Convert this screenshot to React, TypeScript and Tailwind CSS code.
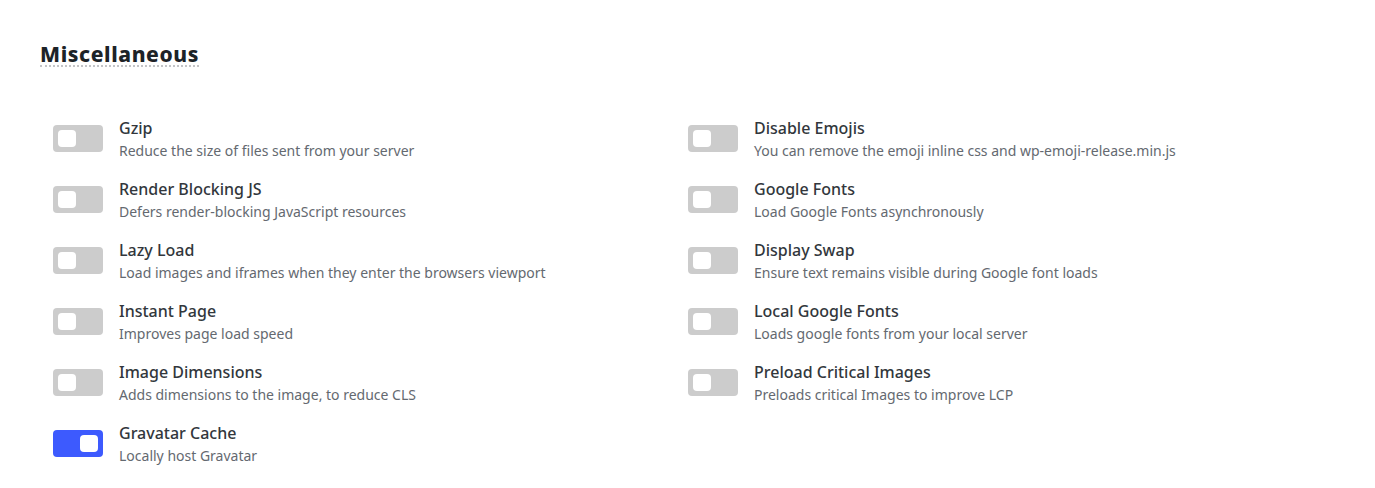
import { useState } from "react";

type Option = {
    key: string;
    title: string;
    description: string;
};

const leftOptions: Option[] = [
    { key: "gzip", title: "Gzip", description: "Reduce the size of files sent from your server" },
    { key: "render_blocking", title: "Render Blocking JS", description: "Defers render-blocking JavaScript resources" },
    { key: "lazy_load", title: "Lazy Load", description: "Load images and iframes when they enter the browsers viewport" },
    { key: "instant_page", title: "Instant Page", description: "Improves page load speed" },
    { key: "image_dimensions", title: "Image Dimensions", description: "Adds dimensions to the image, to reduce CLS" },
    { key: "gravatar_cache", title: "Gravatar Cache", description: "Locally host Gravatar" },
];

const rightOptions: Option[] = [
    { key: "disable_emojis", title: "Disable Emojis", description: "You can remove the emoji inline css and wp-emoji-release.min.js" },
    { key: "google_fonts", title: "Google Fonts", description: "Load Google Fonts asynchronously" },
    { key: "display_swap", title: "Display Swap", description: "Ensure text remains visible during Google font loads" },
    { key: "local_google_fonts", title: "Local Google Fonts", description: "Loads google fonts from your local server" },
    { key: "preload_images", title: "Preload Critical Images", description: "Preloads critical Images to improve LCP" },
];

// Simple square-ish toggle like the WP settings screen
function Toggle({ checked, onChange }: { checked: boolean; onChange: () => void }) {
    return (
        <button
            type="button"
            onClick={onChange}
            className={`flex h-[27px] w-[50px] shrink-0 items-center rounded-[4px] px-[5px] ${
                checked ? "justify-end bg-[#3d5afe]" : "justify-start bg-[#cccccc]"
            }`}
        >
            <span className="block h-[17px] w-[18px] rounded-[4px] bg-white" />
        </button>
    );
}

function OptionRow({ option, checked, onToggle }: { option: Option; checked: boolean; onToggle: () => void }) {
    return (
        <div className="flex h-[61px] items-start gap-4">
            <div className="pt-[9px]">
                <Toggle checked={checked} onChange={onToggle} />
            </div>
            <div className="flex flex-col">
                <span className="text-[16px] leading-[24px] font-medium text-[#32373c]">{option.title}</span>
                <span className="mt-[2px] text-[14px] leading-[18px] text-[#646970]">{option.description}</span>
            </div>
        </div>
    );
}

export default function App() {
    const [enabled, setEnabled] = useState<Record<string, boolean>>({ gravatar_cache: true });

    const toggle = (key: string) => setEnabled((prev) => ({ ...prev, [key]: !prev[key] }));

    return (
        <div className="min-h-[488px] bg-white px-10 pt-[43px] font-['Noto_Sans',sans-serif]">
            <h2 className="inline-block border-b-2 border-dotted border-[#c3c4c7] text-[21px] leading-[22px] font-extrabold tracking-[0.6px] text-[#1d2327]">
                Miscellaneous
            </h2>

            <div className="mt-[48px] grid grid-cols-[635px_1fr] pl-[13px]">
                <div className="flex flex-col">
                    {leftOptions.map((o) => (
                        <OptionRow key={o.key} option={o} checked={!!enabled[o.key]} onToggle={() => toggle(o.key)} />
                    ))}
                </div>
                <div className="flex flex-col">
                    {rightOptions.map((o) => (
                        <OptionRow key={o.key} option={o} checked={!!enabled[o.key]} onToggle={() => toggle(o.key)} />
                    ))}
                </div>
            </div>
        </div>
    );
}
